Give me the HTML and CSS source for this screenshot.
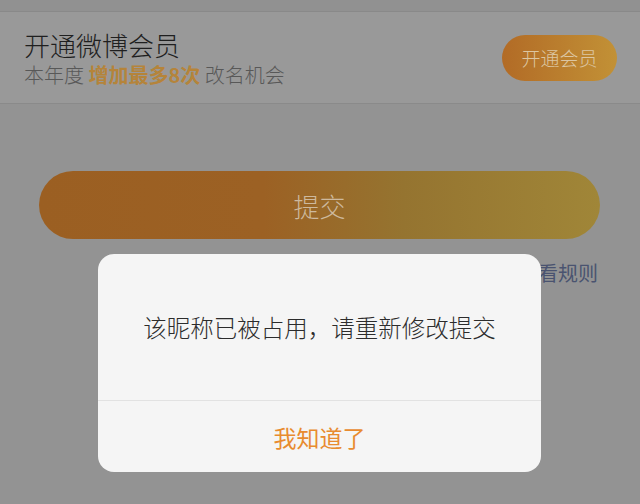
FILE: index.html
```html
<!DOCTYPE html>
<html lang="zh-CN">
<head>
<meta charset="utf-8">
<title>修改昵称</title>
<link rel="stylesheet" href="styles.css">
</head>
<body>
<div class="page">
  <div class="topband"></div>
  <div class="vip-card">
    <div class="vip-info">
      <div class="vip-title">开通微博会员</div>
      <div class="vip-sub">本年度 <span class="hl">增加最多8次</span> 改名机会</div>
    </div>
    <div class="vip-btn">开通会员</div>
  </div>
  <div class="submit">提交</div>
  <div class="rules">查看规则</div>
</div>
<div class="dialog">
  <div class="dialog-msg">该昵称已被占用，请重新修改提交</div>
  <div class="dialog-btn">我知道了</div>
</div>
</body>
</html>
```
FILE: styles.css
```css
html, body {
  margin: 0;
  padding: 0;
}
body {
  width: 640px;
  height: 504px;
  overflow: hidden;
  background: #939393;
  font-family: "Noto Sans CJK SC", "Noto Sans", sans-serif;
  position: relative;
}
.topband {
  height: 11px;
  background: #919191;
  border-bottom: 1px solid #898989;
}
.vip-card {
  height: 91px;
  background: #999999;
  border-bottom: 1px solid #8a8a8a;
  display: flex;
  align-items: center;
  justify-content: space-between;
  padding: 0 23px 0 24px;
}
.vip-info {
  display: flex;
  flex-direction: column;
  gap: 2px;
  padding-top: 3px;
}
.vip-title {
  font-size: 26px;
  line-height: 30px;
  color: #1f1f1f;
  font-weight: 300;
}
.vip-sub {
  font-size: 20px;
  line-height: 26px;
  color: #585858;
  font-weight: 300;
}
.hl {
  color: #b5843a;
  font-weight: 700;
}
.vip-btn {
  width: 115px;
  height: 46px;
  border-radius: 23px;
  background: linear-gradient(90deg, #b26b26, #c29136);
  color: #dcc6a2;
  font-size: 19px;
  font-weight: 300;
  display: flex;
  align-items: center;
  justify-content: center;
}
.submit {
  margin: 67px 40px 0 39px;
  height: 68px;
  border-radius: 34px;
  background: linear-gradient(90deg, #9b5f22, #9c6124 40%, #957430 65%, #a08638);
  color: #cdb99e;
  font-size: 26px;
  font-weight: 300;
  display: flex;
  align-items: center;
  justify-content: center;
}
.rules {
  margin-top: 20px;
  padding-right: 42px;
  text-align: right;
  font-size: 20px;
  line-height: 28px;
  color: #4a5370;
}
.dialog {
  position: absolute;
  left: 98px;
  top: 254px;
  width: 443px;
  height: 218px;
  border-radius: 16px;
  background: #f5f5f5;
  display: flex;
  flex-direction: column;
  overflow: hidden;
}
.dialog-msg {
  height: 146px;
  display: flex;
  align-items: center;
  justify-content: center;
  font-size: 23.5px;
  font-weight: 300;
  color: #2c2c2c;
  border-bottom: 1px solid #e2e2e2;
}
.dialog-btn {
  flex: 1;
  display: flex;
  align-items: center;
  justify-content: center;
  font-size: 23px;
  font-weight: 400;
  color: #e88b2f;
}
```
